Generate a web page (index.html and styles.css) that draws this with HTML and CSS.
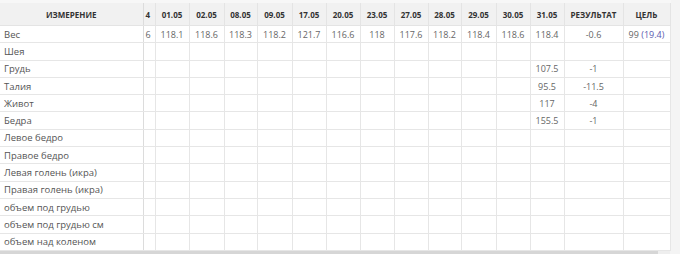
FILE: index.html
```html
<!DOCTYPE html>
<html lang="ru">
<head>
<meta charset="utf-8">
<title>Измерения</title>
<link rel="stylesheet" href="styles.css">
</head>
<body>
<div class="panel">
  <table class="grid">
    <colgroup>
      <col class="c-name"><col class="c-part">
      <col class="w34"><col class="w35"><col class="w33"><col class="w35"><col class="w34"><col class="w34">
      <col class="w34"><col class="w34"><col class="w33"><col class="w35"><col class="w34"><col class="w34">
      <col class="c-res"><col class="c-goal">
    </colgroup>
    <thead>
      <tr>
        <th class="name">ИЗМЕРЕНИЕ</th><th class="part">4</th>
        <th>01.05</th><th>02.05</th><th>08.05</th><th>09.05</th><th>17.05</th><th>20.05</th>
        <th>23.05</th><th>27.05</th><th>28.05</th><th>29.05</th><th>30.05</th><th>31.05</th>
        <th>РЕЗУЛЬТАТ</th><th>ЦЕЛЬ</th>
      </tr>
    </thead>
    <tbody>
      <tr><td class="name">Вес</td><td class="part">6</td><td>118.1</td><td>118.6</td><td>118.3</td><td>118.2</td><td>121.7</td><td>116.6</td><td>118</td><td>117.6</td><td>118.2</td><td>118.4</td><td>118.6</td><td>118.4</td><td>-0.6</td><td>99 <span class="diff">(19.4)</span></td></tr>
      <tr><td class="name">Шея</td><td class="part"></td><td></td><td></td><td></td><td></td><td></td><td></td><td></td><td></td><td></td><td></td><td></td><td></td><td></td><td></td></tr>
      <tr><td class="name">Грудь</td><td class="part"></td><td></td><td></td><td></td><td></td><td></td><td></td><td></td><td></td><td></td><td></td><td></td><td>107.5</td><td>-1</td><td></td></tr>
      <tr><td class="name">Талия</td><td class="part"></td><td></td><td></td><td></td><td></td><td></td><td></td><td></td><td></td><td></td><td></td><td></td><td>95.5</td><td>-11.5</td><td></td></tr>
      <tr><td class="name">Живот</td><td class="part"></td><td></td><td></td><td></td><td></td><td></td><td></td><td></td><td></td><td></td><td></td><td></td><td>117</td><td>-4</td><td></td></tr>
      <tr><td class="name">Бедра</td><td class="part"></td><td></td><td></td><td></td><td></td><td></td><td></td><td></td><td></td><td></td><td></td><td></td><td>155.5</td><td>-1</td><td></td></tr>
      <tr><td class="name">Левое бедро</td><td class="part"></td><td></td><td></td><td></td><td></td><td></td><td></td><td></td><td></td><td></td><td></td><td></td><td></td><td></td><td></td></tr>
      <tr><td class="name">Правое бедро</td><td class="part"></td><td></td><td></td><td></td><td></td><td></td><td></td><td></td><td></td><td></td><td></td><td></td><td></td><td></td><td></td></tr>
      <tr><td class="name">Левая голень (икра)</td><td class="part"></td><td></td><td></td><td></td><td></td><td></td><td></td><td></td><td></td><td></td><td></td><td></td><td></td><td></td><td></td></tr>
      <tr><td class="name">Правая голень (икра)</td><td class="part"></td><td></td><td></td><td></td><td></td><td></td><td></td><td></td><td></td><td></td><td></td><td></td><td></td><td></td><td></td></tr>
      <tr><td class="name">объем под грудью</td><td class="part"></td><td></td><td></td><td></td><td></td><td></td><td></td><td></td><td></td><td></td><td></td><td></td><td></td><td></td><td></td></tr>
      <tr><td class="name">объем под грудью см</td><td class="part"></td><td></td><td></td><td></td><td></td><td></td><td></td><td></td><td></td><td></td><td></td><td></td><td></td><td></td><td></td></tr>
      <tr><td class="name">объем над коленом</td><td class="part"></td><td></td><td></td><td></td><td></td><td></td><td></td><td></td><td></td><td></td><td></td><td></td><td></td><td></td><td></td></tr>
    </tbody>
  </table>
  <div class="scrollbar"><div class="thumb"></div></div>
</div>
</body>
</html>
```

FILE: styles.css
```css
html, body {
  margin: 0;
  padding: 0;
  background: #f4f4f4;
  font-family: "Open Sans", "DejaVu Sans", sans-serif;
}
.panel {
  width: 670px;
  background: #fff;
}
.grid {
  width: 670px;
  table-layout: fixed;
  border-collapse: collapse;
  border-top: 3px solid #f7f7f7;
}
.c-name { width: 143px; }
.c-part { width: 12px; }
.w33 { width: 33px; }
.w34 { width: 34px; }
.w35 { width: 35px; }
.c-res { width: 59px; }
.c-goal { width: 47px; }

.grid th {
  height: 22px;
  padding: 0;
  background: #f1f1f1;
  color: #333;
  font-size: 8px;
  font-weight: 700;
  text-align: center;
  border: 1px solid #e4e4e4;
  border-top: none;
  white-space: nowrap;
  overflow: hidden;
}
.grid td {
  height: 16.3px;
  padding: 0;
  font-size: 9px;
  color: #666;
  text-align: center;
  border: 1px solid #e6e6e6;
  white-space: nowrap;
  overflow: hidden;
}
.grid td.name {
  text-align: left;
  padding-left: 4px;
  color: #555;
  font-size: 9.5px;
  border-left: none;
  border-right-color: #dcdcdc;
}
.grid th.name { border-left: none; border-right-color: #dcdcdc; }
.grid .part {
  text-align: left;
  padding-left: 2px;
}
.diff { color: #5b5bb0; }
.scrollbar {
  height: 4px;
  background: #eeeeee;
}
.thumb {
  width: 658px;
  height: 4px;
  background: #d6d6d6;
}
```
